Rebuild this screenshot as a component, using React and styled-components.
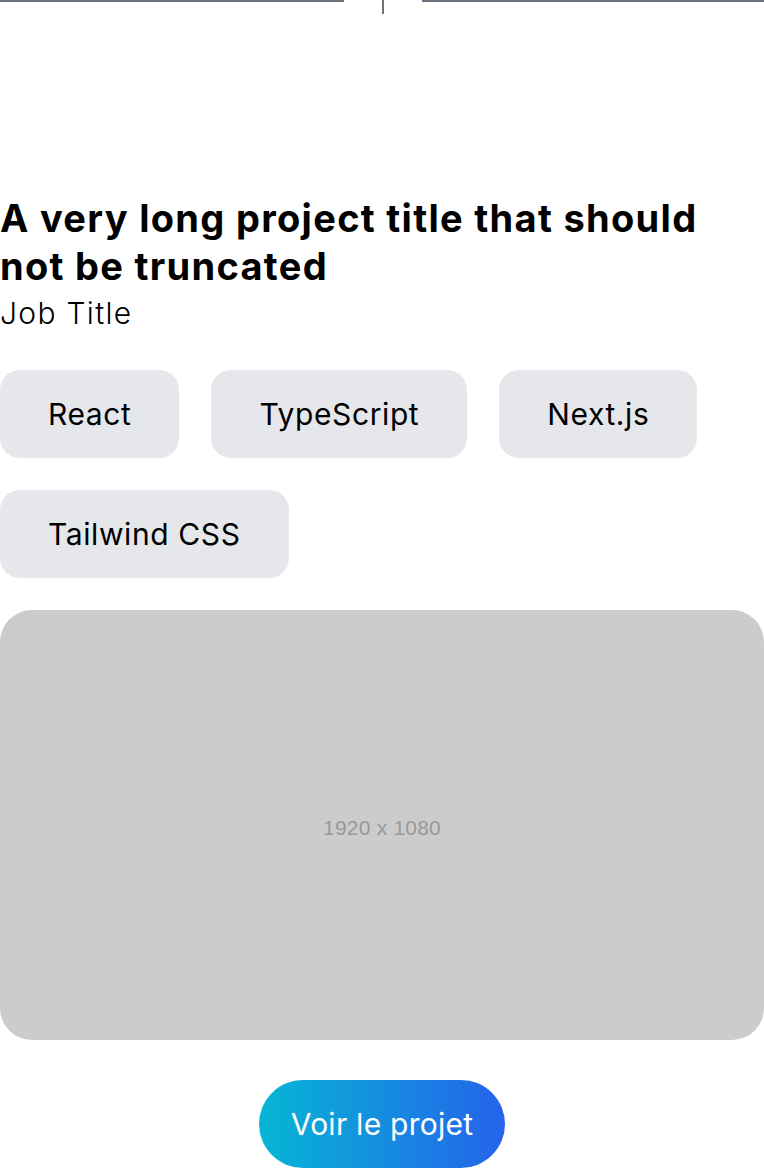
import styled, { createGlobalStyle } from 'styled-components';

const GlobalStyle = createGlobalStyle`
  html, body {
    margin: 0;
    padding: 0;
    background: #fff;
  }
  body {
    font-family: Inter, "Noto Sans", sans-serif;
    color: #000;
  }
`;

const tags = ['React', 'TypeScript', 'Next.js', 'Tailwind CSS'];

export default function App() {
  return (
    <>
      <GlobalStyle />
      <Page>
        <Connector>
          <Rail />
          <Stem />
          <Rail />
        </Connector>
        <Card>
          <Heading>
            <Title>A very long project title that should not be truncated</Title>
            <Role>Job Title</Role>
          </Heading>
          <Tags>
            {tags.map((t) => (
              <Tag key={t}>{t}</Tag>
            ))}
          </Tags>
          <Preview>1920 x 1080</Preview>
          <Actions>
            <CtaButton>Voir le projet</CtaButton>
          </Actions>
        </Card>
      </Page>
    </>
  );
}

const Page = styled.div`
  width: 764px;
`;

const Connector = styled.div`
  display: grid;
  grid-template-columns: 344px 1fr 342px;
  align-items: start;
  height: 194px;
`;

const Rail = styled.div`
  height: 2px;
  background: #6b7280;
`;

const Stem = styled.div`
  justify-self: center;
  width: 2px;
  height: 14px;
  background: #6b7280;
`;

const Card = styled.div`
  display: flex;
  flex-direction: column;
`;

const Heading = styled.div`
  display: flex;
  flex-direction: column;
  margin-bottom: 36px;
`;

const Title = styled.h2`
  margin: 0;
  font-size: 38px;
  line-height: 48px;
  font-weight: 700;
  letter-spacing: 1.3px;
`;

const Role = styled.p`
  margin: 0;
  padding-top: 2px;
  font-size: 30px;
  line-height: 42px;
  font-weight: 300;
  letter-spacing: 1.3px;
`;

const Tags = styled.div`
  display: flex;
  flex-wrap: wrap;
  gap: 32px;
  margin-bottom: 32px;
`;

const Tag = styled.span`
  display: inline-flex;
  align-items: center;
  height: 88px;
  padding: 0 48px;
  box-sizing: border-box;
  border-radius: 20px;
  background: #e5e7eb;
  font-size: 30px;
  font-weight: 400;
  letter-spacing: 0.6px;
`;

const Preview = styled.div`
  display: flex;
  align-items: center;
  justify-content: center;
  padding-top: 6px;
  box-sizing: border-box;
  aspect-ratio: 16 / 9;
  border-radius: 32px;
  background: #cccccc;
  color: #999999;
  font-family: "Liberation Sans", Arial, sans-serif;
  font-size: 21px;
  letter-spacing: 0.2px;
  margin-bottom: 40px;
`;

const Actions = styled.div`
  display: flex;
  justify-content: center;
`;

const CtaButton = styled.button`
  height: 88px;
  padding: 0 32px;
  border: none;
  border-radius: 9999px;
  background: linear-gradient(to right, #06b6d4, #2563eb);
  color: #fff;
  font-family: Inter, "Noto Sans", sans-serif;
  font-size: 30px;
  font-weight: 400;
  letter-spacing: 0.25px;
  cursor: pointer;
`;
